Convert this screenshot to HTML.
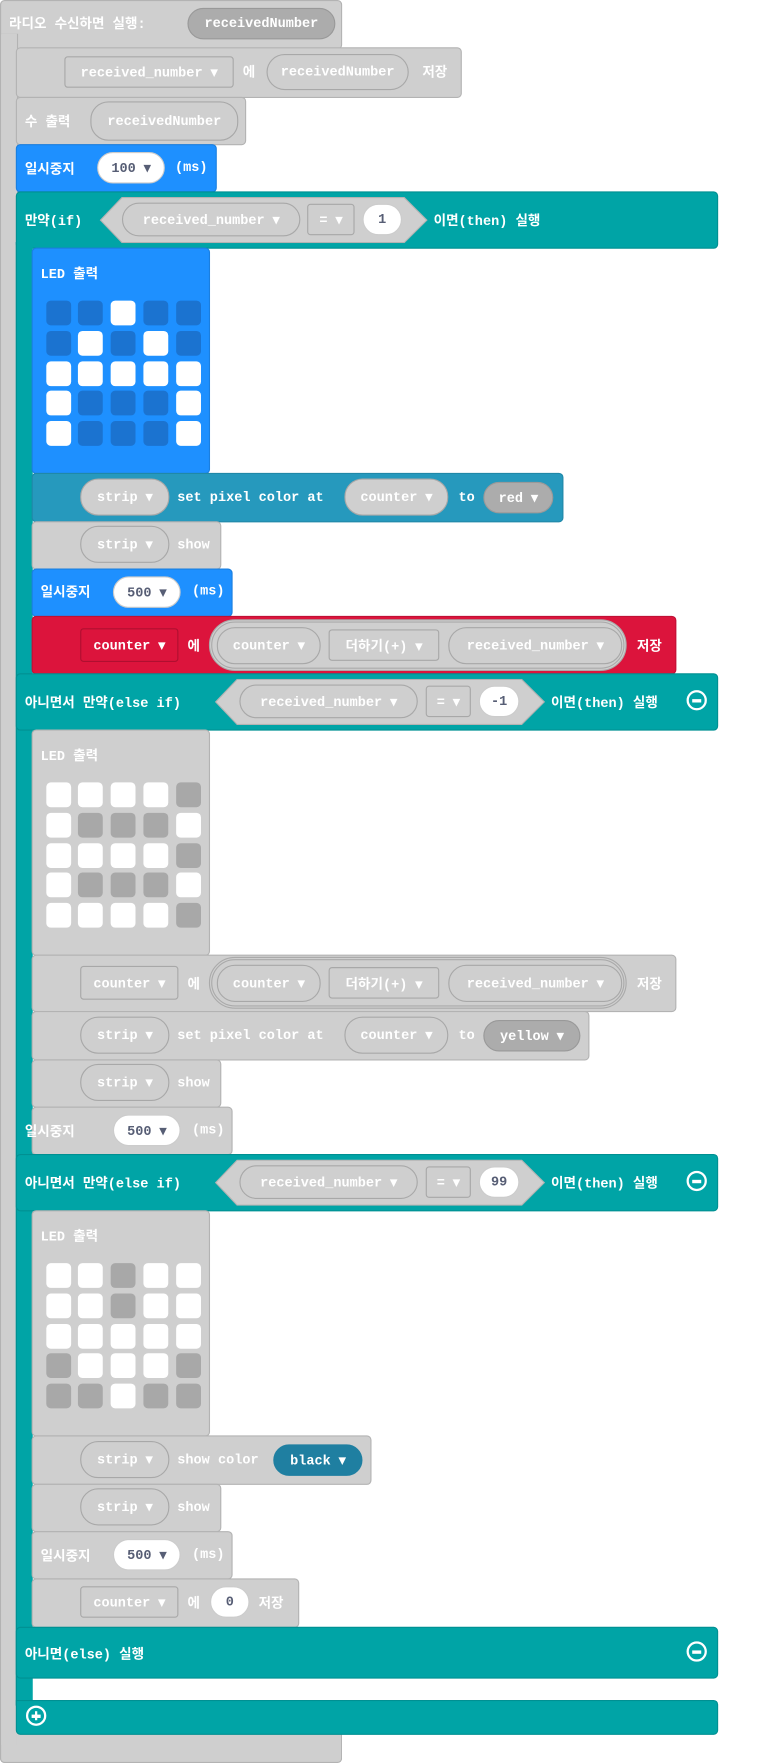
<!DOCTYPE html>
<html><head><meta charset="utf-8"><style>
html,body{margin:0;padding:0;background:#fff;width:778px;height:1763px;overflow:hidden}
#w{position:absolute;left:0;top:0;width:691px;height:1566px;transform:scale(1.1292,1.1258);transform-origin:0 0}
div{box-sizing:border-box}
.a{position:absolute}
.g{background:#cfcfcf;border:1px solid #b3b3b3;border-radius:4px}
.bl{background:#1e90ff;border:1px solid #1a7fe0;border-radius:4px}
.tl{background:#00a4a6;border:1px solid #009092;border-radius:4px}
.tp{background:#2699bd;border:1px solid #2088a8;border-radius:4px}
.rd{background:#dc143c;border:1px solid #c01035;border-radius:4px}
.t{position:absolute;color:#fff;font:bold 12px "Liberation Mono","Noto Sans CJK KR",monospace;white-space:nowrap;line-height:16px}
.k{margin-top:2px}
.p{position:absolute;border-radius:16px;border:1px solid #a8a8a8;background:#cfcfcf;color:#fff;font:bold 12px "Liberation Mono","Noto Sans CJK KR",monospace;display:flex;align-items:center;justify-content:center;white-space:nowrap}
.wp{background:#fff;color:#575e75;border-color:#ccc}
.dp{background:#acacac;border-color:#999}
.r{border-radius:3px}
.led{position:absolute;width:22px;height:22px;border-radius:4px}
.c{position:absolute;width:18px;height:18px;border:2px solid #fff;border-radius:50%}
.c:after{content:"";position:absolute;left:3px;top:6px;width:8px;height:2.5px;background:#fff}
.pl:before{content:"";position:absolute;left:5.7px;top:3px;width:2.5px;height:8px;background:#fff}
</style></head><body><div id="w">
<div class="a g" style="left:0;top:0;width:303px;height:44px"></div>
<div class="a g" style="left:0;top:30px;width:16px;height:1536px;border-radius:0 0 4px 4px"></div>
<div class="a g" style="left:0;top:1538px;width:303px;height:28px;border-top:none;border-radius:0 0 4px 4px"></div>
<div class="a" style="left:1px;top:30px;width:14px;height:1520px;background:#cfcfcf"></div>
<div class="t k" style="left:8px;top:12px">라디오 수신하면 실행:</div>
<div class="p dp" style="left:166px;top:7px;width:131px;height:28px">receivedNumber</div>

<div class="a g" style="left:14px;top:42px;width:395px;height:45px"></div>
<div class="p r" style="left:57px;top:50px;width:150px;height:28px">received_number ▾</div>
<div class="t k" style="left:215px;top:55px">에</div>
<div class="p" style="left:236px;top:48px;width:126px;height:32px">receivedNumber</div>
<div class="t k" style="left:374px;top:55px">저장</div>
<div class="a g" style="left:14px;top:86px;width:204px;height:43px"></div>
<div class="t k" style="left:22px;top:99px">수 출력</div>
<div class="p" style="left:80px;top:90px;width:131px;height:35px">receivedNumber</div>
<div class="a bl" style="left:14px;top:128px;width:178px;height:43px"></div>
<div class="t k" style="left:22px;top:141px">일시중지</div>
<div class="p wp" style="left:86px;top:135px;width:60px;height:28px">100 ▾</div>
<div class="t" style="left:155px;top:141px">(ms)</div>

<div class="a tl" style="left:14px;top:170px;width:622px;height:51px"></div>
<div class="a" style="left:14px;top:215px;width:15px;height:1300px;background:#00a4a6;border-left:1px solid #009092"></div>
<div class="t k" style="left:22px;top:187px">만약(if)</div>
<svg class="a" style="left:88px;top:175px" width="292" height="41"><polygon points="20,0.5 270,0.5 290,20.5 270,40.5 20,40.5 1,20.5" fill="#cfcfcf" stroke="#b3b3b3"/></svg>
<div class="p" style="left:108px;top:180px;width:158px;height:30px">received_number ▾</div>
<div class="p r" style="left:272px;top:181px;width:42px;height:28px">= ▾</div>
<div class="p wp" style="left:321px;top:181px;width:35px;height:28px">1</div>
<div class="t k" style="left:384px;top:187px">이면(then) 실행</div>

<div class="a bl" style="left:28px;top:220px;width:158px;height:201px"></div>
<div class="t k" style="left:36px;top:234px">LED 출력</div>
<div class="a tp" style="left:28px;top:420px;width:471px;height:44px"></div>
<div class="p" style="left:71px;top:425px;width:79px;height:33px">strip ▾</div>
<div class="t" style="left:157px;top:434px">set pixel color at</div>
<div class="p" style="left:305px;top:425px;width:92px;height:33px">counter ▾</div>
<div class="t" style="left:406px;top:434px">to</div>
<div class="p dp" style="left:428px;top:428px;width:62px;height:28px">red ▾</div>
<div class="a g" style="left:28px;top:463px;width:168px;height:43px"></div>
<div class="p" style="left:71px;top:467px;width:79px;height:33px">strip ▾</div>
<div class="t" style="left:157px;top:476px">show</div>
<div class="a bl" style="left:28px;top:505px;width:178px;height:43px"></div>
<div class="t k" style="left:36px;top:517px">일시중지</div>
<div class="p wp" style="left:100px;top:512px;width:60px;height:28px">500 ▾</div>
<div class="t" style="left:170px;top:517px">(ms)</div>
<div class="a rd" style="left:28px;top:547px;width:571px;height:52px"></div>
<div class="p r" style="left:71px;top:558px;width:87px;height:30px;background:#dc143c;border-color:#b00f30">counter ▾</div>
<div class="t k" style="left:166px;top:565px">에</div>
<div class="p" style="left:185px;top:550px;width:370px;height:46px;border-radius:23px;border:3px double #aaa"></div>
<div class="p" style="left:192px;top:557px;width:92px;height:33px">counter ▾</div>
<div class="p r" style="left:291px;top:559px;width:98px;height:28px">더하기(+) ▾</div>
<div class="p" style="left:397px;top:557px;width:154px;height:33px">received_number ▾</div>
<div class="t k" style="left:564px;top:565px">저장</div>

<div class="a tl" style="left:14px;top:598px;width:622px;height:51px"></div>
<div class="t k" style="left:22px;top:615px">아니면서 만약(else if)</div>
<svg class="a" style="left:190px;top:603px" width="294" height="41"><polygon points="20,0.5 272,0.5 292,20.5 272,40.5 20,40.5 1,20.5" fill="#cfcfcf" stroke="#b3b3b3"/></svg>
<div class="p" style="left:212px;top:608px;width:158px;height:30px">received_number ▾</div>
<div class="p r" style="left:377px;top:609px;width:40px;height:28px">= ▾</div>
<div class="p wp" style="left:424px;top:609px;width:36px;height:28px">-1</div>
<div class="t k" style="left:488px;top:615px">이면(then) 실행</div>
<div class="c" style="left:608px;top:613px"></div>

<div class="a g" style="left:28px;top:648px;width:158px;height:201px"></div>
<div class="t k" style="left:36px;top:662px">LED 출력</div>
<div class="a g" style="left:28px;top:848px;width:571px;height:51px"></div>
<div class="p r" style="left:71px;top:858px;width:87px;height:30px">counter ▾</div>
<div class="t k" style="left:166px;top:865px">에</div>
<div class="p" style="left:185px;top:850px;width:370px;height:46px;border-radius:23px;border:3px double #aaa"></div>
<div class="p" style="left:192px;top:857px;width:92px;height:33px">counter ▾</div>
<div class="p r" style="left:291px;top:859px;width:98px;height:28px">더하기(+) ▾</div>
<div class="p" style="left:397px;top:857px;width:154px;height:33px">received_number ▾</div>
<div class="t k" style="left:564px;top:865px">저장</div>
<div class="a g" style="left:28px;top:898px;width:494px;height:44px"></div>
<div class="p" style="left:71px;top:903px;width:79px;height:33px">strip ▾</div>
<div class="t" style="left:157px;top:912px">set pixel color at</div>
<div class="p" style="left:305px;top:903px;width:92px;height:33px">counter ▾</div>
<div class="t" style="left:406px;top:912px">to</div>
<div class="p dp" style="left:428px;top:906px;width:86px;height:28px">yellow ▾</div>
<div class="a g" style="left:28px;top:941px;width:168px;height:43px"></div>
<div class="p" style="left:71px;top:945px;width:79px;height:33px">strip ▾</div>
<div class="t" style="left:157px;top:954px">show</div>
<div class="a g" style="left:28px;top:983px;width:178px;height:43px"></div>
<div class="t k" style="left:22px;top:996px">일시중지</div>
<div class="p wp" style="left:100px;top:990px;width:60px;height:28px">500 ▾</div>
<div class="t" style="left:170px;top:996px">(ms)</div>

<div class="a tl" style="left:14px;top:1025px;width:622px;height:51px"></div>
<div class="t k" style="left:22px;top:1042px">아니면서 만약(else if)</div>
<svg class="a" style="left:190px;top:1030px" width="294" height="41"><polygon points="20,0.5 272,0.5 292,20.5 272,40.5 20,40.5 1,20.5" fill="#cfcfcf" stroke="#b3b3b3"/></svg>
<div class="p" style="left:212px;top:1035px;width:158px;height:30px">received_number ▾</div>
<div class="p r" style="left:377px;top:1036px;width:40px;height:28px">= ▾</div>
<div class="p wp" style="left:424px;top:1036px;width:36px;height:28px">99</div>
<div class="t k" style="left:488px;top:1042px">이면(then) 실행</div>
<div class="c" style="left:608px;top:1040px"></div>

<div class="a g" style="left:28px;top:1075px;width:158px;height:201px"></div>
<div class="t k" style="left:36px;top:1089px">LED 출력</div>
<div class="a g" style="left:28px;top:1275px;width:301px;height:44px"></div>
<div class="p" style="left:71px;top:1280px;width:79px;height:33px">strip ▾</div>
<div class="t" style="left:157px;top:1289px">show color</div>
<div class="p" style="left:242px;top:1283px;width:79px;height:28px;background:#1f7fa1;border-color:#1f7fa1">black ▾</div>
<div class="a g" style="left:28px;top:1318px;width:168px;height:43px"></div>
<div class="p" style="left:71px;top:1322px;width:79px;height:33px">strip ▾</div>
<div class="t" style="left:157px;top:1331px">show</div>
<div class="a g" style="left:28px;top:1360px;width:178px;height:43px"></div>
<div class="t k" style="left:36px;top:1373px">일시중지</div>
<div class="p wp" style="left:100px;top:1367px;width:60px;height:28px">500 ▾</div>
<div class="t" style="left:170px;top:1373px">(ms)</div>
<div class="a g" style="left:28px;top:1402px;width:237px;height:44px"></div>
<div class="p r" style="left:71px;top:1409px;width:87px;height:28px">counter ▾</div>
<div class="t k" style="left:166px;top:1415px">에</div>
<div class="p wp" style="left:186px;top:1409px;width:35px;height:28px">0</div>
<div class="t k" style="left:229px;top:1415px">저장</div>

<div class="a tl" style="left:14px;top:1445px;width:622px;height:46px"></div>
<div class="t k" style="left:22px;top:1460px">아니면(else) 실행</div>
<div class="c" style="left:608px;top:1458px"></div>
<div class="a tl" style="left:14px;top:1510px;width:622px;height:31px;border-radius:0 4px 4px 4px"></div>
<div class="c pl" style="left:23px;top:1515px"></div>
</div>
<script>
var w=document.getElementById('w');
function grid(top,pat,on,off){var xs=[41,69,98,127,156];for(var r=0;r<5;r++)for(var c=0;c<5;c++){var d=document.createElement('div');d.className='led';d.style.left=xs[c]+'px';d.style.top=(top+r*26.8)+'px';d.style.background=pat[r][c]=='1'?on:off;w.appendChild(d);}}
grid(267,['00100','01010','11111','10001','10001'],'#fff','#1b73d0');
grid(695,['11110','10001','11110','10001','11110'],'#fff','#a8a8a8');
grid(1122,['11011','11011','11111','01110','00100'],'#fff','#a8a8a8');
</script>
</body></html>
